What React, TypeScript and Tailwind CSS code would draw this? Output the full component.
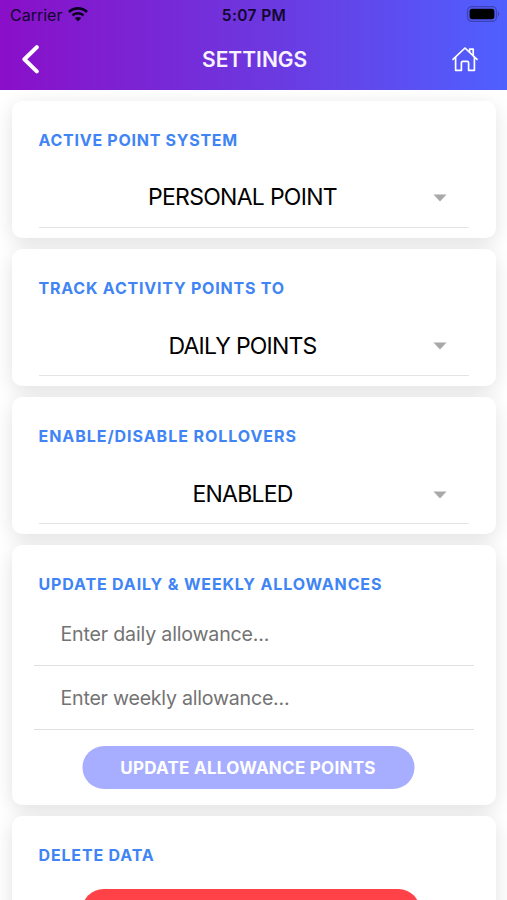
import type { ReactNode } from "react";

function StatusBar() {
  return (
    <div className="flex h-[30px] items-center text-[#12062f]">
      <div className="flex flex-1 items-center gap-[6px] pl-[10px]">
        <span className="text-[16px] leading-[30px]">Carrier</span>
        <svg width="20" height="15" viewBox="0 0 20 15" className="mb-px">
          <path d="M10 0C6.2 0 2.700 1.500.1 4l1.800 2C4 4 6.800 2.800 10 2.800S16 4 18.100 6l1.800-2C17.300 1.500 13.800 0 10 0z" fill="#0a0320" />
          <path d="M10 4.900c-2.500 0-4.700 1-6.400 2.600l1.800 2C6.600 8.300 8.200 7.600 10 7.600s3.400.7 4.600 1.900l1.800-2C14.700 5.900 12.500 4.900 10 4.900z" fill="#0a0320" />
          <path d="M10 14.500 6.800 11.100c1.800-1.600 4.600-1.600 6.400 0z" fill="#0a0320" />
        </svg>
      </div>
      <span className="-translate-x-px pt-px text-[15.5px] leading-[29px] font-semibold tracking-[0.4px]">5:07 PM</span>
      <div className="flex flex-1 justify-end pr-[7px]">
        <svg width="34" height="16" viewBox="0 0 34 16" className="mb-[2px]">
          <rect x="1.5" y="0.6" width="29" height="14.8" rx="4.5" fill="none" stroke="#3f42b4" strokeWidth="1.3" />
          <rect x="3.6" y="2.8" width="24.8" height="10.4" rx="2.6" fill="#000" />
          <path d="M32 5.600c1.800.8 1.800 4 0 4.800z" fill="#3f42b4" />
        </svg>
      </div>
    </div>
  );
}

function Header() {
  return (
    <header className="h-[90px] shrink-0 bg-[linear-gradient(90deg,#8a0fc8_0%,#6e36de_50%,#4f60ff_100%)]">
      <StatusBar />
      <div className="flex h-[60px] items-center">
        <div className="flex w-[202px] pl-[21px]">
          <svg width="20" height="30" viewBox="0 0 20 30" fill="none" stroke="#fff" strokeWidth="4" strokeLinecap="round" strokeLinejoin="round">
            <path d="M15.800 2.200 3.400 14.300 15.800 26.400" />
          </svg>
        </div>
        <h1 className="text-[21px] font-semibold text-[#f8f2ff]">SETTINGS</h1>
        <div className="flex flex-1 justify-end pr-[28px]">
          <svg width="28" height="26" viewBox="0 0 28 26" fill="none" stroke="#fff" strokeWidth="1.7" strokeLinecap="round" strokeLinejoin="round" className="-translate-y-px">
            <path d="M2 13.400 14 2l12 11.400" />
            <path d="M4.600 11.400v12.900H10.400v-7.500c0-.8.6-1.400 1.400-1.400h4.400c.8 0 1.400.6 1.400 1.400v7.500h5.800V11.400" />
            <path d="M18.600 6V3.200h3.600v6.400" />
          </svg>
        </div>
      </div>
    </header>
  );
}

function Card({ title, titleClass, children, className }: { title: string; titleClass: string; children: ReactNode; className: string }) {
  return (
    <section className={`shrink-0 rounded-[10px] bg-white px-[27px] pt-[29px] shadow-[0_5px_20px_rgba(0,0,0,0.12)] ${className}`}>
      <h2 className={`h-[20px] text-[16px] leading-[20px] font-bold whitespace-nowrap text-[#4084f5] ${titleClass}`}>{title}</h2>
      {children}
    </section>
  );
}

function Select({ value, className }: { value: string; className: string }) {
  return (
    <div className="mt-[19px] flex h-[59px] items-center border-b-[1.5px] border-[#e4e4e6] pr-[22px]">
      <span className={`flex-1 text-center text-[23px] text-black ${className}`}>{value}</span>
      <svg width="14" height="8" viewBox="0 0 14 8" className="mt-px -ml-[14px]">
        <path d="M.5.5h13L7 7.5z" fill="#a8a8a8" />
      </svg>
    </div>
  );
}

function Field({ placeholder, className }: { placeholder: string; className: string }) {
  return (
    <div className="-mx-[5px] flex h-[64px] items-center border-b-[1.5px] border-[#dfdfe1]">
      <input
        className={`w-full pt-[2px] pl-[27px] text-[19.6px] text-[#737373] outline-none placeholder:text-[#737373] ${className}`}
        placeholder={placeholder}
      />
    </div>
  );
}

export default function App() {
  return (
    <div className="flex h-[900px] w-[507px] flex-col overflow-hidden bg-white font-['Inter','Liberation_Sans',sans-serif]">
      <Header />
      <main className="flex flex-1 flex-col gap-[11px] overflow-hidden px-[11.5px] pt-[10.5px]">
        <Card title="ACTIVE POINT SYSTEM" titleClass="tracking-[0.73px]" className="h-[137.3px]">
          <Select value="PERSONAL POINT" className="tracking-[-0.72px]" />
        </Card>
        <Card title="TRACK ACTIVITY POINTS TO" titleClass="tracking-[0.79px]" className="h-[137.3px]">
          <Select value="DAILY POINTS" className="tracking-[-0.78px]" />
        </Card>
        <Card title="ENABLE/DISABLE ROLLOVERS" titleClass="tracking-[0.95px]" className="h-[137.3px]">
          <Select value="ENABLED" className="tracking-[-0.75px]" />
        </Card>
        <Card title="UPDATE DAILY & WEEKLY ALLOWANCES" titleClass="tracking-[0.85px]" className="h-[259.8px]">
          <div className="mt-[8px]">
            <Field placeholder="Enter daily allowance..." className="tracking-[-0.18px]" />
            <Field placeholder="Enter weekly allowance..." className="tracking-[-0.23px]" />
          </div>
          <button className="mx-auto mt-[16px] block h-[43px] w-[332px] -translate-x-[5.5px] rounded-full bg-[#a8aeff] pt-[2px] text-[17px] font-bold whitespace-nowrap text-white tracking-[0.27px]">
            UPDATE ALLOWANCE POINTS
          </button>
        </Card>
        <Card title="DELETE DATA" titleClass="tracking-[0.84px]" className="h-[170px]">
          <button className="mx-auto mt-[24px] block h-[43px] w-[338px] -translate-x-[3px] rounded-full bg-[#ff4248]" />
        </Card>
      </main>
    </div>
  );
}
